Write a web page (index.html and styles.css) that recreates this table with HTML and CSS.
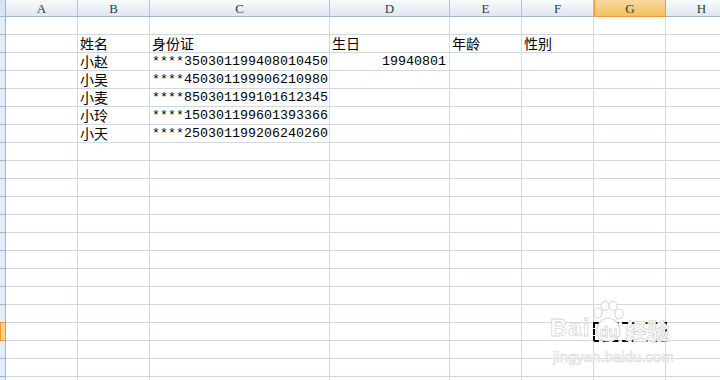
FILE: index.html
```html
<!DOCTYPE html>
<html lang="zh-CN">
<head>
    <meta charset="UTF-8">
    <title>Book1</title>
    <link rel="stylesheet" href="styles.css">
</head>
<body>
    <div class="sheet">
        <!-- column headers -->
        <div class="corner"></div><div class="col">A</div><div class="col">B</div><div class="col">C</div><div class="col">D</div><div class="col">E</div><div class="col">F</div><div class="col active">G</div><div class="col">H</div>

        <!-- 1 -->
        <div class="rh"></div><div></div><div></div><div></div><div></div><div></div><div></div><div></div><div></div>
        <!-- 2 -->
        <div class="rh"></div><div></div><div>姓名</div><div>身份证</div><div>生日</div><div>年龄</div><div>性别</div><div></div><div></div>
        <!-- 3 -->
        <div class="rh"></div><div></div><div>小赵</div><div class="num">****350301199408010450</div><div class="num right">19940801</div><div></div><div></div><div></div><div></div>
        <!-- 4 -->
        <div class="rh"></div><div></div><div>小吴</div><div class="num">****450301199906210980</div><div></div><div></div><div></div><div></div><div></div>
        <!-- 5 -->
        <div class="rh"></div><div></div><div>小麦</div><div class="num">****850301199101612345</div><div></div><div></div><div></div><div></div><div></div>
        <!-- 6 -->
        <div class="rh"></div><div></div><div>小玲</div><div class="num">****150301199601393366</div><div></div><div></div><div></div><div></div><div></div>
        <!-- 7 -->
        <div class="rh"></div><div></div><div>小天</div><div class="num">****250301199206240260</div><div></div><div></div><div></div><div></div><div></div>
        <!-- 8 -->
        <div class="rh"></div><div></div><div></div><div></div><div></div><div></div><div></div><div></div><div></div>
        <!-- 9 -->
        <div class="rh"></div><div></div><div></div><div></div><div></div><div></div><div></div><div></div><div></div>
        <!-- 10 -->
        <div class="rh"></div><div></div><div></div><div></div><div></div><div></div><div></div><div></div><div></div>
        <!-- 11 -->
        <div class="rh"></div><div></div><div></div><div></div><div></div><div></div><div></div><div></div><div></div>
        <!-- 12 -->
        <div class="rh"></div><div></div><div></div><div></div><div></div><div></div><div></div><div></div><div></div>
        <!-- 13 -->
        <div class="rh"></div><div></div><div></div><div></div><div></div><div></div><div></div><div></div><div></div>
        <!-- 14 -->
        <div class="rh"></div><div></div><div></div><div></div><div></div><div></div><div></div><div></div><div></div>
        <!-- 15 -->
        <div class="rh"></div><div></div><div></div><div></div><div></div><div></div><div></div><div></div><div></div>
        <!-- 16 -->
        <div class="rh"></div><div></div><div></div><div></div><div></div><div></div><div></div><div></div><div></div>
        <!-- 17 -->
        <div class="rh"></div><div></div><div></div><div></div><div></div><div></div><div></div><div></div><div></div>
        <!-- 18: copied cell -->
        <div class="rh active"></div><div></div><div></div><div></div><div></div><div></div><div></div><div class="sel"></div><div></div>
        <!-- 19 -->
        <div class="rh"></div><div></div><div></div><div></div><div></div><div></div><div></div><div></div><div></div>
        <!-- 20 -->
        <div class="rh"></div><div></div><div></div><div></div><div></div><div></div><div></div><div></div><div></div>
        <!-- 21 -->
        <div class="rh"></div><div></div><div></div><div></div><div></div><div></div><div></div><div></div><div></div>
    </div>

    <div class="watermark">
        <div class="logo">
            <span class="bai">Bai</span>
            <svg class="paw" width="34" height="42" viewBox="0 0 34 42">
                <g fill="#fff" stroke="#dadada" stroke-width="1.2">
                    <ellipse cx="7" cy="12" rx="4" ry="5"/>
                    <ellipse cx="14" cy="5" rx="4" ry="4.5"/>
                    <ellipse cx="22" cy="5" rx="4" ry="4.5"/>
                    <ellipse cx="28" cy="13" rx="4" ry="5"/>
                    <path d="M6 30 C6 22 12 17 17 17 C22 17 29 22 29 30 C29 38 24 40 17 40 C10 40 6 38 6 30 Z"/>
                </g>
                <text x="17.5" y="36" text-anchor="middle" font-family="Liberation Sans, sans-serif" font-size="15" font-weight="bold" fill="#fff" stroke="#d6d6d6" stroke-width="0.8">du</text>
            </svg>
            <span class="jy">经验</span>
        </div>
        <div class="url">jingyan.baidu.com</div>
    </div>
</body>
</html>
```

FILE: styles.css
```css
body {
    margin: 0;
    overflow: hidden;
    background: #fff;
    font-family: "Noto Sans CJK SC", sans-serif;
}

.sheet {
    display: grid;
    grid-template-columns: 6px 72px 72px 180px 120px 72px 72px 72px 72px;
    grid-template-rows: 17px;
    grid-auto-rows: 18px;
    width: 736px;
}
.sheet > div {
    box-sizing: border-box;
    border-right: 1px solid #d0d7e5;
    border-bottom: 1px solid #d0d7e5;
    padding-left: 2px;
    font-size: 14px;
    line-height: 17px;
    color: #000;
    white-space: nowrap;
}

/* numbers use the half-width column font */
.sheet > .num {
    font-family: "Liberation Mono", monospace;
    font-size: 13.33px;
    line-height: 18px;
}
.sheet > .right {
    text-align: right;
    padding-right: 3px;
}

/* header strip */
.sheet > .corner,
.sheet > .col {
    background: linear-gradient(#f9fcfd, #dfe6f0);
    border-right: 1px solid #b4c4d8;
    border-bottom: 1px solid #9eb6ce;
}
.sheet > .corner {
    padding: 0;
    background: #dbe5f1;
    border-right-color: #9eb6ce;
}
.sheet > .col {
    padding: 0;
    text-align: center;
    font-family: "Liberation Serif", serif;
    font-size: 13px;
    line-height: 17px;
    color: #27413e;
}
.sheet > .col.active {
    background: linear-gradient(#f9d99f, #f1c15f);
    border: 1px solid #f29536;
    border-top: none;
}

/* row header strip */
.sheet > .rh {
    padding: 0;
    background: #e4ecf7;
    border-right: 1px solid #9eb6ce;
    border-bottom: 1px solid #9eb6ce;
}
.sheet > .rh.active {
    background: #ffd58d;
    border: 1px solid #f29536;
    margin-top: -1px;
    height: 19px;
}

/* copy marquee */
.sheet > .sel {
    outline: 2px dashed #000;
    outline-offset: -1px;
}

/* site watermark */
.watermark {
    position: absolute;
    left: 550px;
    top: 301px;
    width: 134px;
    font-family: "Liberation Sans", sans-serif;
    color: #fff;
    pointer-events: none;
}
.logo {
    display: flex;
    align-items: flex-end;
    height: 42px;
}
.bai {
    font-size: 24px;
    font-weight: bold;
    line-height: 24px;
    margin-bottom: 3px;
    letter-spacing: 1px;
    -webkit-text-stroke: 0.8px #d8d8d8;
}
.paw {
    display: block;
    margin-left: 1px;
}
.jy {
    font-family: "Noto Sans CJK SC", sans-serif;
    font-size: 22px;
    font-weight: bold;
    line-height: 24px;
    margin-bottom: 2px;
    -webkit-text-stroke: 0.8px #d8d8d8;
}
.url {
    margin-top: 6px;
    padding-left: 3px;
    font-size: 15px;
    line-height: 16px;
    -webkit-text-stroke: 0.7px #dcdcdc;
}
```
